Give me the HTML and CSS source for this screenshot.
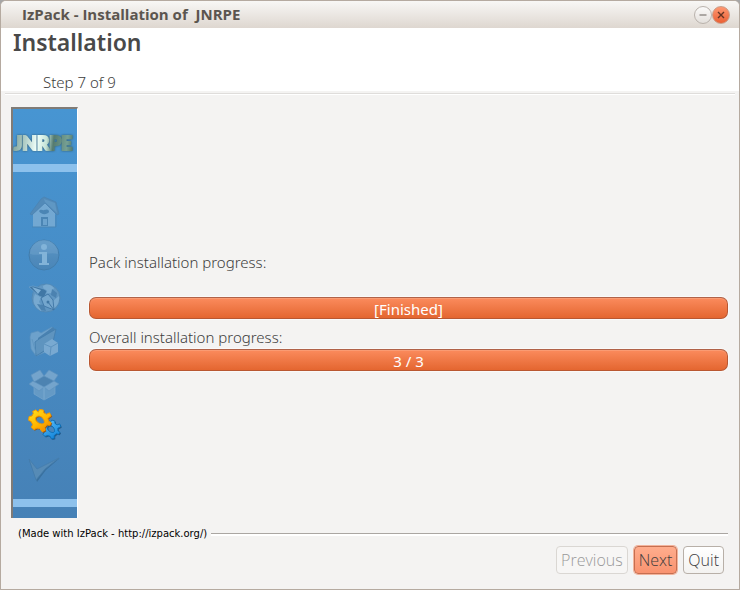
FILE: index.html
```html
<!DOCTYPE html>
<html lang="en">
<head>
<meta charset="utf-8">
<title>IzPack - Installation of JNRPE</title>
<link rel="stylesheet" href="styles.css">
</head>
<body>
<div class="window">
  <div class="titlebar">
    <div class="caption">IzPack - Installation of&nbsp; JNRPE</div>
    <button class="control" aria-label="Minimize"><svg viewBox="0 0 16 16"><path d="M4.500 8h7"/></svg></button>
    <button class="control close" aria-label="Close"><svg viewBox="0 0 16 16"><path d="M5 5l6 6M11 5l-6 6"/></svg></button>
  </div>
  <header class="heading">
    <h1>Installation</h1>
    <p>Step 7 of 9</p>
  </header>
  <div class="content">
    <aside class="sidebar">
      <svg class="logo" viewBox="0 0 64 20" role="img" aria-label="JNRPE">
        <defs>
          <linearGradient id="metal" gradientUnits="userSpaceOnUse" x1="0" y1="0" x2="68" y2="8">
            <stop offset="0" stop-color="#7b9f98"/><stop offset=".2" stop-color="#b5d1ca"/><stop offset=".36" stop-color="#effff9"/>
            <stop offset=".5" stop-color="#c4e3d7"/><stop offset=".6" stop-color="#557b70"/><stop offset=".8" stop-color="#76a093"/><stop offset="1" stop-color="#254e48"/>
          </linearGradient>
        </defs>
        <text x="1" y="16">JNRPE</text>
      </svg>
      <div class="stripe"></div>
      <div class="steps">
        <svg viewBox="0 0 32 32" class="dim">
          <path fill="#7eafd4" d="M5 16L16 6l11 10v15H5z"/>
          <path fill="#5589b4" stroke="#4a7eaa" stroke-width=".7" d="M2 18L13 3l3-2 12 5 3 12-2 1L17 7 4 19z"/>
          <path fill="#6599c2" d="M16 3l11 4 2 10L17 6z"/>
          <path fill="#4d83af" d="M13 21h7v9h-7zM11 15c2-3 4 0 5-1 3-1 5-1 5 2-2 3-8 3-10-1z"/>
          <path fill="#76a8cf" d="M15 23h4v6h-4z"/>
          <path fill="none" stroke="#4b83b1" d="M4 31h24V19"/>
        </svg>
        <svg viewBox="0 0 32 32" class="dim">
          <defs><linearGradient id="info" x2="0" y2="1"><stop stop-color="#77a8ce"/><stop offset=".5" stop-color="#558dbb"/><stop offset="1" stop-color="#4b84b4"/></linearGradient></defs>
          <circle cx="16" cy="16" r="15" fill="url(#info)" stroke="#4279a5"/>
          <path fill="#6da0c8" opacity=".7" d="M2 15a14 14 0 0 1 28 0c-8-3-18 3-28 0z"/>
          <circle cx="16" cy="8" r="3" fill="#91bddd"/>
          <path fill="#91bddd" d="M11 13h8v11h2v2H11v-2h3v-9h-3z"/>
        </svg>
        <svg viewBox="0 0 32 32" class="dim">
          <circle cx="18" cy="16" r="14" fill="#6799c2" stroke="#5588b1"/>
          <path fill="#84b1d3" d="M15 4c5-3 8-1 11 2l-3 5-7 1zM7 12l6 3-2 5 4 5-2 4C6 25 4 19 7 12zM25 19l6-5c1 7-3 12-8 14z"/>
          <path fill="#4d80ac" d="M24 7l5 4-1 5-5-3zM9 22l7 1 2 6-5-1z"/>
          <path fill="#3f739e" stroke="#74a5cb" stroke-width=".7" d="M1 5l4-1 11 3 3 2-3 7-5-2z"/>
          <path fill="#8eb9da" d="M4 5l9 3-3 4z"/>
          <path fill="#80add0" stroke="#3d719d" stroke-width=".9" d="M13 16l7-4 5 6 1 10-10-4z"/>
          <path fill="none" stroke="#3d719d" d="M26 28l-6-8"/><circle cx="20" cy="20" r="1.500" fill="#3d719d"/>
        </svg>
        <svg viewBox="0 0 32 32" class="dim">
          <path fill="#77a7ce" stroke="#6094bd" stroke-width=".7" d="M2 12l1-4 7-2 3 2 11-6 2 2-3 21-15 6-5-7z"/>
          <path fill="#4a80ad" d="M10 13L25 2l2 2-3 17-12 8z"/>
          <path fill="#6597bf" stroke="#427aa7" stroke-width=".8" d="M7 17l4-3 17-10-4 17L8 31z"/>
          <path fill="#86b2d5" d="M16 19l8-5 6 4v9l-8 4-6-4z"/>
          <path fill="none" stroke="#6395be" d="M16 19l7 3 7-4M23 22l-1 9"/>
          <path fill="none" stroke="#6295bd" stroke-width=".8" d="M4 14l4 14"/>
        </svg>
        <svg viewBox="0 0 32 32" class="dim">
          <path fill="#6d9fc7" stroke="#83aed0" stroke-width=".7" d="M6 15l10 4 11-4v11l-11 6-10-6z"/>
          <path fill="#4f83ae" d="M5 13l11-6 10 6-10 6z"/>
          <path fill="#80acd0" stroke="#6495be" stroke-width=".7" d="M3 7l9-5 4 6-10 6zM16 8l5-6 9 5-4 6zM1 16l4-3 11 6-5 4zM16 19l10-6 5 3-10 7z"/>
          <path fill="none" stroke="#92bbda" stroke-width=".7" d="M16 19v12"/>
        </svg>
        <svg viewBox="0 0 32 32">
          <defs>
            <linearGradient id="gold" x2="1" y2="1"><stop stop-color="#ffe421"/><stop offset=".55" stop-color="#ffb600"/><stop offset="1" stop-color="#ed7d00"/></linearGradient>
            <linearGradient id="azure" x2="1" y2="1"><stop stop-color="#62c4ff"/><stop offset="1" stop-color="#087bd3"/></linearGradient>
            <path id="cog" fill-rule="evenodd" d="M-2-11H2L3-8 6-7 9-9 11-6 8-3 9 0 12 1 11 4 8 4 6 7 7 10 4 12 1 9-2 9-5 11-8 9-7 6-9 3-12 2-12-2-9-3-8-6-9-8-6-10-3-8zM-4-3C-1-6 5-2 5 2C4 6-5 3-5-1Q-5-2-4-3z"/>
          </defs>
          <use href="#cog" transform="translate(24 19) rotate(15) scale(.8)" fill="#245a88"/>
          <use href="#cog" transform="translate(23 18) rotate(15) scale(.8)" fill="url(#azure)" stroke="#086bb4"/>
          <use href="#cog" transform="translate(13 10) rotate(8) scale(.96)" fill="#96591c"/>
          <use href="#cog" transform="translate(12 9) rotate(8) scale(.94)" fill="url(#gold)" stroke="#f39a00"/>
        </svg>
        <svg viewBox="0 0 32 32" class="dim">
          <path fill="#376d99" d="M1 6l8 10L32 4 18 16 9 28z"/>
          <path fill="#5b8db6" stroke="#447ba8" stroke-width=".8" d="M1 5l8 10L31 4 17 15 8 26z"/>
        </svg>
      </div>
      <div class="stripe"></div>
    </aside>
    <main class="progress-panel">
      <div class="label" id="pack">Pack installation progress:</div>
      <div class="bar first" role="progressbar" aria-labelledby="pack" aria-valuenow="100">[Finished]</div>
      <div class="label second" id="overall">Overall installation progress:</div>
      <div class="bar" role="progressbar" aria-labelledby="overall" aria-valuenow="3" aria-valuemax="3">3 / 3</div>
    </main>
  </div>
  <footer>
    <div class="credit">(Made with IzPack - http://izpack.org/)</div>
    <div class="buttons">
      <button class="btn" disabled>Previous</button>
      <button class="btn next">Next</button>
      <button class="btn">Quit</button>
    </div>
  </footer>
</div>
</body>
</html>
```
FILE: styles.css
```css
* { box-sizing: border-box; }
body {
  margin: 0;
  background: #a6a6a6;
  color: #3c3c3c;
  font: 300 15px/20px "Noto Sans", "Open Sans", sans-serif;
}
.window {
  display: flex;
  flex-direction: column;
  min-height: 100vh;
  border: 1px solid #b5aaa0;
  border-radius: 6px 6px 0 0;
  background: #f4f3f2;
  overflow: hidden;
}
.titlebar {
  display: flex;
  align-items: center;
  height: 27px;
  padding: 0 9px 0 21px;
  background: linear-gradient(#f8f7f5, #ded7d0);
}
.caption {
  flex: 1;
  padding-bottom: 2px;
  color: #5b554f;
  font: 700 15px/20px "Open Sans", "Noto Sans", sans-serif;
}
.control {
  width: 18px;
  height: 18px;
  padding: 0;
  border: 1px solid #b9b2ac;
  border-radius: 50%;
  background: linear-gradient(#fbfaf9, #e4e0dc);
}
.control svg { display: block; width: 16px; height: 16px; fill: none; stroke: #69625c; stroke-width: 1.2; }
.close { border-color: #c99c87; background: linear-gradient(#ff9871, #ea6034); }
.close svg { stroke: #633323; stroke-width: 1.4; }
.heading {
  height: 63px;
  padding: 2px 12px 0;
  background: #fff;
}
h1 { margin: 0; color: #494949; font: 600 23px/24px "Noto Sans", sans-serif; }
.heading p { margin: 18px 0 0 30px; }
.content {
  display: flex;
  flex: 1;
  gap: 11px;
  margin: 2px 4px 0;
  padding: 13px 7px 0 6px;
  border-top: 1px solid #dfdddb;
  box-shadow: inset 0 1px #fff;
}
.sidebar {
  display: flex;
  flex-direction: column;
  width: 67px;
  padding-top: 25px;
  border: 2px solid #807b76;
  border-width: 2px 1px 0 2px;
  border-right-color: #fff;
  background: linear-gradient(#4795d2, #4681b6);
}
.logo { display: block; width: 64px; height: 20px; overflow: visible; }
.logo text { fill: url(#metal); stroke: url(#metal); stroke-width: 2; font: 900 19px Lato, sans-serif; filter: drop-shadow(0 0 1px #315e75); }
.stripe { height: 8px; margin: 10px 0 11px; background: #8dc1ec; }
.steps { display: flex; flex: 1; flex-direction: column; align-items: center; gap: 11px; padding: 13px 2px 0 0; }
.steps svg { display: block; width: 32px; height: 32px; overflow: visible; }
.dim { opacity: .8; }
.progress-panel { display: flex; flex: 1; flex-direction: column; justify-content: center; padding-bottom: 2px; }
.label { margin-bottom: 2px; }
.first { margin-top: 23px; }
.second { margin-top: 8px; }
.bar {
  height: 22px;
  border: 1px solid #b95731;
  border-top-color: #b06248;
  border-radius: 7px;
  background: linear-gradient(#fb8b5d, #e46630);
  box-shadow: 0 0 0 1px #fff8, inset 0 1px #fa9b73;
  color: #fff;
  font-weight: 400;
  line-height: 22px;
  text-align: center;
}
footer { padding: 8px 11px 15px 17px; }
.credit {
  display: flex;
  align-items: center;
  gap: 4px;
  color: #000;
  font: 10px/16px "DejaVu Sans", sans-serif;
}
.credit::after { content: ""; flex: 1; height: 2px; border-top: 1px solid #aaa6a2; background: #fff; }
.buttons { display: flex; justify-content: flex-end; gap: 6px; padding: 4px 4px 0 0; }
.btn {
  height: 28px;
  padding: 0 4px;
  border: 1px solid #b8b0a8;
  border-radius: 4px;
  background: linear-gradient(#fff, #f3f2f0);
  color: #3c3c3c;
  font: 300 16px/24px "Open Sans", sans-serif;
}
.btn:disabled { border-color: #dad7d3; background: #f7f6f5; color: #999; }
.next { border-color: #c66f50; background: linear-gradient(#ffad8d, #f99370); box-shadow: 0 0 0 1px #f2b49d; }
```
